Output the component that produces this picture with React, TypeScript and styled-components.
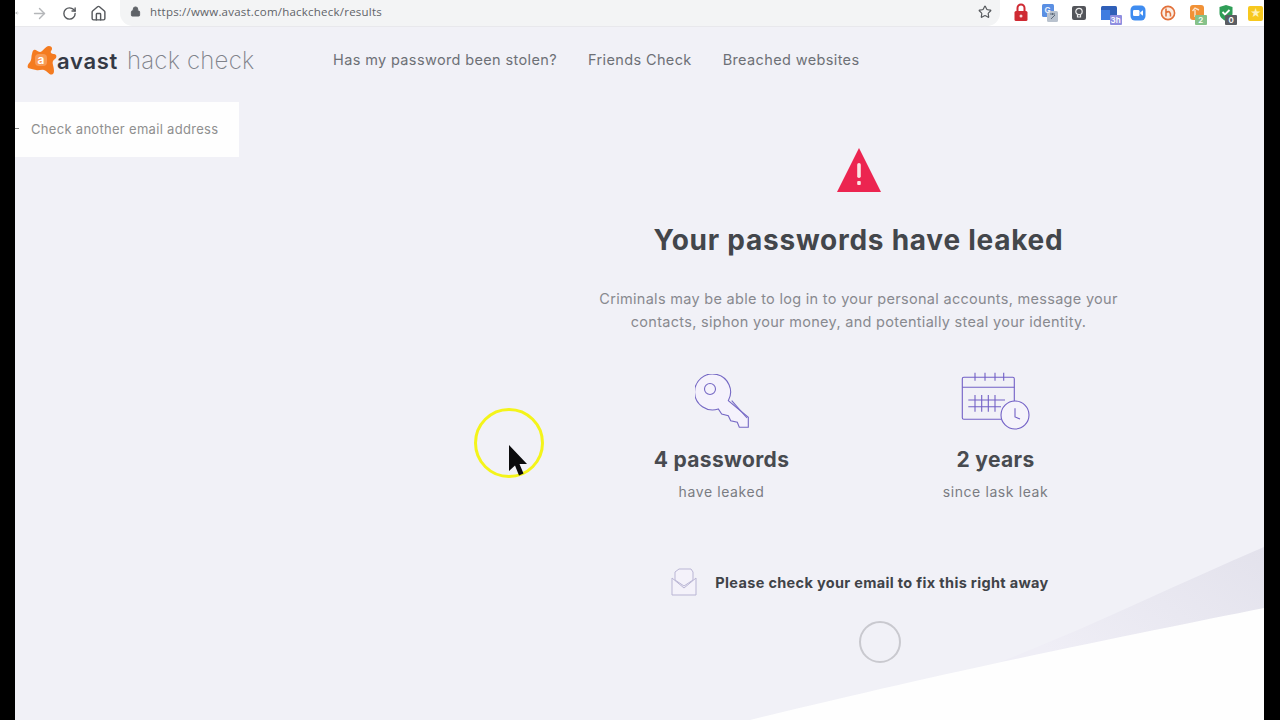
import styled, { createGlobalStyle } from "styled-components";
import { ArrowLeft, ArrowRight, Home, Lock, RotateCw, Star } from "lucide-react";

const GlobalStyle = createGlobalStyle`
  html, body {
    margin: 0;
    padding: 0;
    background: #000;
    font-family: Inter, "Open Sans", sans-serif;
  }
`;

const NAV_LINKS = ["Has my password been stolen?", "Friends Check", "Breached websites"];

export default function App() {
  return (
    <>
      <GlobalStyle />
      <Screen>
        <Viewport>
          <Toolbar>
            <NavButtons>
              <BackArrow><ArrowLeft size={16} color="#5f6368" /></BackArrow>
              <ForwardArrow><ArrowRight size={17} color="#b4b6b9" /></ForwardArrow>
              <ReloadIcon><RotateCw size={15} color="#55585c" strokeWidth={2.2} /></ReloadIcon>
              <HomeIcon><Home size={17} color="#55585c" /></HomeIcon>
            </NavButtons>
            <UrlPill>
              <Lock size={11} color="#5f6368" fill="#5f6368" />
              <UrlText>https://www.avast.com/hackcheck/results</UrlText>
              <Star size={14} color="#55585c" />
            </UrlPill>
            <Extensions>
              <ExtensionSlot>
                <svg width="16" height="20" viewBox="0 0 16 20">
                  <path d="M4.5 8V5a3.5 3.5 0 0 1 7 0v3" fill="none" stroke="#cf2a33" strokeWidth="2" />
                  <rect x="1.5" y="8" width="13" height="10" rx="1.5" fill="#cf2a33" />
                  <circle cx="8" cy="13" r="1.5" fill="#f6d7d9" />
                </svg>
              </ExtensionSlot>
              <ExtensionSlot>
                <svg width="18" height="20" viewBox="0 0 18 20">
                  <rect x="1" y="1" width="12" height="13" rx="1.5" fill="#5a8fe3" />
                  <rect x="6" y="8" width="11" height="11" rx="1.5" fill="#b9c2ce" />
                  <path d="M9 11h5M11.5 10v2M10 16l4-4" stroke="#5d6a7a" strokeWidth="1" fill="none" />
                  <text x="3.5" y="10" fontSize="8" fontWeight="700" fill="#e8f0fc" fontFamily="Inter, sans-serif">G</text>
                </svg>
              </ExtensionSlot>
              <ExtensionSlot>
                <svg width="16" height="16" viewBox="0 0 16 16">
                  <rect x="1" y="1" width="14" height="14" rx="2" fill="#53555a" />
                  <circle cx="8" cy="6.5" r="3.2" fill="none" stroke="#eee" strokeWidth="1.2" />
                  <path d="M6.5 10v2h3v-2" fill="none" stroke="#eee" strokeWidth="1.2" />
                </svg>
              </ExtensionSlot>
              <ExtensionSlot>
                <svg width="18" height="16" viewBox="0 0 18 16">
                  <rect x="1" y="1" width="16" height="14" rx="1.5" fill="#2f5fb8" />
                  <rect x="1" y="5" width="9" height="10" fill="#3f7de0" />
                </svg>
                <Badge $bg="#8f8fe0" $right={2}>3h</Badge>
              </ExtensionSlot>
              <ExtensionSlot>
                <svg width="16" height="16" viewBox="0 0 16 16">
                  <rect x="0.5" y="0.5" width="15" height="15" rx="4.5" fill="#3f8cf0" />
                  <rect x="3" y="5" width="6.5" height="6" rx="1.2" fill="#fff" />
                  <path d="M10.3 7.2 13 5.3v5.4l-2.7-1.9z" fill="#fff" />
                </svg>
              </ExtensionSlot>
              <ExtensionSlot>
                <svg width="16" height="16" viewBox="0 0 16 16">
                  <circle cx="8" cy="8" r="6.6" fill="#fbeee4" stroke="#e2703a" strokeWidth="1.6" />
                  <path d="M6 3.5v8M6 7.5c3-2 5-.5 4.5 4" fill="none" stroke="#e2703a" strokeWidth="1.6" />
                </svg>
              </ExtensionSlot>
              <ExtensionSlot>
                <svg width="16" height="18" viewBox="0 0 16 18">
                  <rect x="1" y="1" width="14" height="15" rx="3" fill="#f19136" />
                  <path d="M6 13V6M3.5 7 6 4l4 2" fill="none" stroke="#fbe3cb" strokeWidth="1.4" />
                </svg>
                <Badge $bg="#86c28a" $right={5}>2</Badge>
              </ExtensionSlot>
              <ExtensionSlot>
                <svg width="16" height="18" viewBox="0 0 16 18">
                  <path d="M8 1 14.5 3v6c0 4-3 6.5-6.5 8C4.5 15.5 1.5 13 1.5 9V3z" fill="#2f9e57" />
                  <path d="M4.5 8 7 10.5 11.5 6" fill="none" stroke="#fff" strokeWidth="1.8" />
                </svg>
                <Badge $bg="#5b5e63" $right={4}>0</Badge>
              </ExtensionSlot>
              <ExtensionSlot>
                <YellowTile>★</YellowTile>
              </ExtensionSlot>
            </Extensions>
          </Toolbar>

          <Page>
            <Header>
              <Logo>
                <svg width="31" height="31" viewBox="0 0 31 31">
                  <path
                    d="M7 5C9 4 10 7 13 7C16 7 18 1 22 1C25 1 26 4 24 6C23 8 25 9 27 9C30 9 30 13 28 14C26 15 25 17 26 20C27 24 28 29 25 29.5C22 30 20 26 17 25C14 24 12 26 9 25C6 24 3 24 1 23C0 21 1 19 3 17C5 14 4 12 5 9C5.5 7 5.5 5.5 7 5z"
                    fill="#f47b20"
                  />
                  <rect x="8" y="9" width="12" height="12" rx="4" fill="#f89a54" />
                  <text x="14" y="19" textAnchor="middle" fontSize="12" fontWeight="600" fill="#fff" fontFamily="Inter, sans-serif">a</text>
                </svg>
                <LogoBrand>avast</LogoBrand>
                <LogoProduct>hack check</LogoProduct>
              </Logo>
              <Nav>
                {NAV_LINKS.map((link) => (
                  <NavLink key={link}>{link}</NavLink>
                ))}
              </Nav>
            </Header>

            <Body>
              <LeftColumn>
                <BackCard>
                  <BackTick />
                  <BackLabel>Check another email address</BackLabel>
                </BackCard>
              </LeftColumn>

              <ResultColumn>
                <svg width="46" height="45" viewBox="0 0 46 45">
                  <path d="M23 1 45 45H1z" fill="#ec2550" />
                  <rect x="21.2" y="16" width="3.6" height="15" rx="1.8" fill="#fbe4e4" />
                  <rect x="21.2" y="34" width="3.6" height="4" rx="1" fill="#fbe4e4" />
                </svg>
                <Title>Your passwords have leaked</Title>
                <Description>
                  Criminals may be able to log in to your personal accounts, message your
                  <br />
                  contacts, siphon your money, and potentially steal your identity.
                </Description>

                <Stats>
                  <Stat>
                    <KeyIcon>
                      <svg width="56" height="56" viewBox="0 0 56 56" fill="#f5f2fc" stroke="#7568c4" strokeWidth="1.1">
                        <path d="M23.3 35A18 18 0 1 1 33.3 26.7L53.3 43.3V53.3H44.3L42.3 48.3 35.7 46.7 33.3 41.7 26.7 40z" />
                        <circle cx="15" cy="15" r="5.5" fill="none" />
                        <path d="M36.7 26.7 52 44" fill="none" />
                      </svg>
                    </KeyIcon>
                    <StatValue>4 passwords</StatValue>
                    <StatLabel>have leaked</StatLabel>
                  </Stat>
                  <Stat>
                    <StatIcon>
                      <svg width="69" height="58" viewBox="0 0 69 58" fill="none" stroke="#7260c6" strokeWidth="1.1">
                        <rect x="1.3" y="5.3" width="52" height="42" rx="1.5" />
                        <path d="M1.3 15.3H53.3" />
                        <path d="M14 .7V8.7M24 .7V8.7M34 .7V8.7M42.7 .7V8.7" />
                        <path d="M7.3 28H44M7.3 34.7H40M14 23V39.7M20.7 23V39.7M27.3 23V39.7M34 23V39.7" />
                        <circle cx="54" cy="43" r="14" fill="#f5f3fb" />
                        <path d="M54 36.3V45L59 47" />
                      </svg>
                    </StatIcon>
                    <StatValue>2 years</StatValue>
                    <StatLabel>since lask leak</StatLabel>
                  </Stat>
                </Stats>

                <EmailRow>
                  <svg width="26" height="28" viewBox="0 0 26 28" fill="#f4f2fa" stroke="#b9b5d4" strokeWidth="1">
                    <path d="M1 10V27H25V10" />
                    <path d="M4 12V4L8 1H20L22 4V12L13 18z" />
                    <path d="M1 10 13 20 25 10" fill="none" />
                  </svg>
                  <EmailText>Please check your email to fix this right away</EmailText>
                </EmailRow>
                <Spinner />
              </ResultColumn>
            </Body>

            <Wave viewBox="0 0 1249 720" width="1249" height="720">
              <defs>
                <linearGradient id="band" x1="1" y1="0" x2="0" y2="0.6">
                  <stop offset="0" stopColor="#e3e2ec" />
                  <stop offset="1" stopColor="#efeef6" />
                </linearGradient>
              </defs>
              <path d="M1249 547C1160 585 1080 625 985 662L1249 640z" fill="url(#band)" />
              <path d="M1249 608C1130 632 960 665 735 720H1249z" fill="#fefefe" />
            </Wave>

            <Highlight>
              <svg width="20" height="34" viewBox="0 0 20 34">
                <path d="M1 1V27L7 21.5 11 31.5 15.5 29.5 11.5 20H19z" fill="#0b0b0d" />
              </svg>
            </Highlight>
          </Page>
        </Viewport>
      </Screen>
    </>
  );
}

const Screen = styled.div`
  width: 1280px;
  height: 720px;
  display: flex;
  background: #000;
  overflow: hidden;
`;

const Viewport = styled.div`
  width: 1249px;
  margin-left: 15px;
  height: 720px;
  display: flex;
  flex-direction: column;
  overflow: hidden;
`;

const Toolbar = styled.div`
  height: 27px;
  flex-shrink: 0;
  display: flex;
  align-items: center;
  background: #fff;
  border-bottom: 1px solid #e8e8ec;
  box-sizing: border-box;
`;

const NavButtons = styled.div`
  width: 105px;
  height: 100%;
  display: flex;
  align-items: center;
  flex-shrink: 0;
`;

const IconSlot = styled.span`
  display: flex;
  align-items: center;
  justify-content: center;
`;

const BackArrow = styled(IconSlot)`
  width: 4px;
  justify-content: flex-end;
  overflow: hidden;
`;

const ForwardArrow = styled(IconSlot)`
  width: 17px;
  margin-left: 12px;
`;

const ReloadIcon = styled(IconSlot)`
  width: 17px;
  margin-left: 13px;
`;

const HomeIcon = styled(IconSlot)`
  width: 17px;
  margin-left: 12px;
`;

const UrlPill = styled.div`
  width: 880px;
  height: 100%;
  box-sizing: border-box;
  padding: 0 8px 3px 10px;
  display: flex;
  align-items: center;
  background: #f3f4f5;
  border-radius: 0 0 13px 13px;
  flex-shrink: 0;
`;

const UrlText = styled.span`
  margin-left: 9px;
  flex: 1;
  font-size: 11.5px;
  letter-spacing: 0.22px;
  color: #5f6368;
  font-family: "Open Sans", sans-serif;
`;

const Extensions = styled.div`
  display: flex;
  align-items: center;
  margin-left: 6px;
`;

const ExtensionSlot = styled.span`
  position: relative;
  width: 29.4px;
  height: 24px;
  display: flex;
  align-items: center;
  justify-content: center;
  flex-shrink: 0;
`;

const Badge = styled.span<{ $bg: string; $right: number }>`
  position: absolute;
  right: ${(props) => props.$right}px;
  bottom: 0;
  min-width: 10px;
  height: 10px;
  padding: 0 1px;
  border-radius: 1px;
  background: ${(props) => props.$bg};
  color: #fff;
  font-size: 8px;
  font-weight: 600;
  line-height: 10px;
  text-align: center;
`;

const YellowTile = styled.span`
  width: 15px;
  height: 15px;
  display: flex;
  align-items: center;
  justify-content: center;
  background: #f7c81e;
  border-radius: 2px;
  color: #fdf2bd;
  font-size: 11px;
`;

const Page = styled.div`
  position: relative;
  flex: 1;
  background: #f1f1f7;
  overflow: hidden;
`;

const Header = styled.header`
  height: 75px;
  box-sizing: border-box;
  padding: 18px 0 0 12px;
  display: flex;
  align-items: flex-start;
`;

const Logo = styled.div`
  width: 306px;
  height: 31px;
  display: flex;
  align-items: center;
`;

const LogoBrand = styled.span`
  margin-left: -1px;
  font-size: 22px;
  font-weight: 600;
  color: #343945;
  letter-spacing: 0.7px;
`;

const LogoProduct = styled.span`
  margin-left: 9px;
  font-size: 24px;
  font-weight: 200;
  color: #7f828a;
  letter-spacing: 0.2px;
`;

const Nav = styled.nav`
  display: flex;
  gap: 31px;
  height: 29px;
  align-items: center;
`;

const NavLink = styled.a`
  font-size: 14.5px;
  letter-spacing: 0.37px;
  color: #6d7076;
`;

const Body = styled.main`
  position: relative;
  z-index: 1;
  display: grid;
  grid-template-columns: 563px 561px;
`;

const LeftColumn = styled.div`
  display: flex;
  flex-direction: column;
`;

const BackCard = styled.a`
  width: 224px;
  height: 55px;
  padding-bottom: 2px;
  box-sizing: border-box;
  display: flex;
  align-items: center;
  background: #fefefe;
`;

const BackTick = styled.span`
  width: 4px;
  height: 1px;
  background: #888;
`;

const BackLabel = styled.span`
  margin-left: 12px;
  font-size: 13px;
  letter-spacing: 0.3px;
  color: #8f8f8f;
`;

const ResultColumn = styled.section`
  padding-top: 45px;
  display: flex;
  flex-direction: column;
  align-items: center;
`;

const Title = styled.h1`
  margin: 29px 0 0;
  font-size: 28px;
  line-height: 38px;
  font-weight: 700;
  letter-spacing: 0.75px;
  color: #43464b;
  font-family: Inter, sans-serif;
`;

const Description = styled.p`
  margin: 28px 0 0;
  font-size: 14.5px;
  line-height: 23px;
  letter-spacing: 0.3px;
  color: #88898f;
  text-align: center;
`;

const Stats = styled.div`
  margin-top: 37px;
  width: 548px;
  display: grid;
  grid-template-columns: 1fr 1fr;
`;

const Stat = styled.div`
  display: flex;
  flex-direction: column;
  align-items: center;
`;

const StatIcon = styled.div`
  height: 60px;
  display: flex;
  align-items: flex-end;
`;

const KeyIcon = styled(StatIcon)`
  margin-left: 3px;
`;

const StatValue = styled.div`
  margin-top: 15px;
  font-size: 21px;
  line-height: 30px;
  font-weight: 700;
  letter-spacing: 0.35px;
  color: #484b50;
`;

const StatLabel = styled.div`
  margin-top: 7px;
  font-size: 14px;
  line-height: 20px;
  letter-spacing: 0.6px;
  color: #7a7c82;
`;

const EmailRow = styled.div`
  margin-top: 66px;
  margin-left: 3px;
  display: flex;
  align-items: center;
  gap: 18px;
`;

const EmailText = styled.span`
  font-size: 14.5px;
  font-weight: 700;
  letter-spacing: 0.33px;
  color: #404348;
`;

const Spinner = styled.div`
  margin-top: 25px;
  margin-left: 42px;
  width: 42px;
  height: 42px;
  box-sizing: border-box;
  border: 2px solid #c9c9cf;
  border-radius: 50%;
`;

const Wave = styled.svg`
  position: absolute;
  left: 0;
  top: -27px;
  pointer-events: none;
`;

const Highlight = styled.div`
  position: absolute;
  left: 459px;
  top: 381px;
  width: 70px;
  height: 70px;
  box-sizing: border-box;
  border: 3px solid #f4f41a;
  border-radius: 50%;

  svg {
    position: absolute;
    left: 31px;
    top: 33px;
  }
`;
